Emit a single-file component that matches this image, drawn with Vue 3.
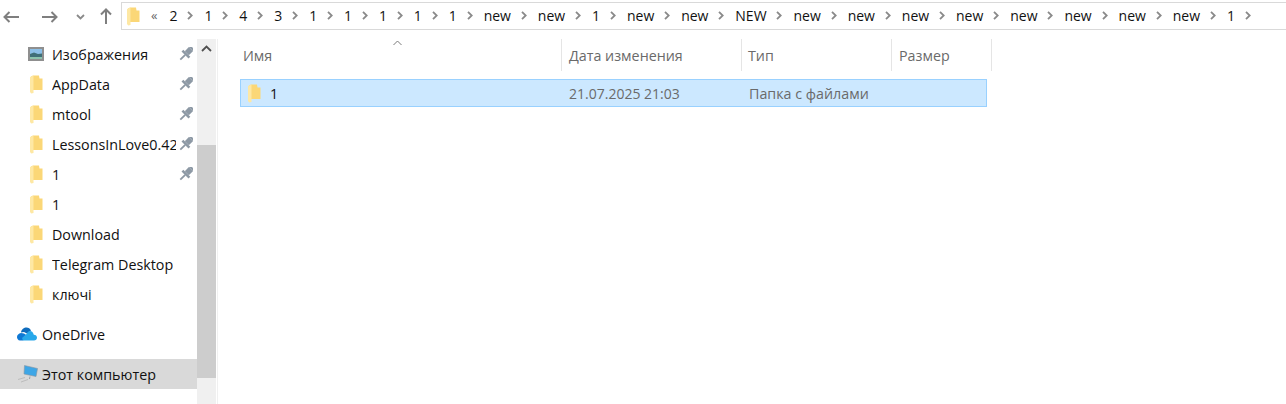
<script setup>
const crumbs = ['2','1','4','3','1','1','1','1','1','new','new','1','new','new','NEW','new','new','new','new','new','new','new','new','1']
const nav = [
  { name: 'Изображения', icon: 'img', pin: true },
  { name: 'AppData', icon: 'folder', pin: true },
  { name: 'mtool', icon: 'folder', pin: true },
  { name: 'LessonsInLove0.42.0', icon: 'folder', pin: true },
  { name: '1', icon: 'folder', pin: true },
  { name: '1', icon: 'folder' },
  { name: 'Download', icon: 'folder' },
  { name: 'Telegram Desktop', icon: 'folder' },
  { name: 'ключі', icon: 'folder' },
]
const folderBack = 'M1 1.500 3 .5H9L9.500 3.500H12.500V15H1z'
const folderFlap = 'M0 2 3.500 .5V4.500 18L1.200 18.500 0 17z'
</script>

<template>
  <div class="win">
    <div class="toolbar">
      <div class="navbtns">
        <svg class="back" width="16" height="12" viewBox="0 0 16 12"><path d="M1.500 6H16M6.500 1 1.500 6l5 5" fill="none" stroke="#7f7f7f" stroke-width="2"/></svg>
        <svg class="fwd" width="16" height="12" viewBox="0 0 16 12"><path d="M0 6H14.500M9.500 1l5 5-5 5" fill="none" stroke="#7f7f7f" stroke-width="2"/></svg>
        <svg class="down" width="9" height="6" viewBox="0 0 9 6"><path d="M1 1l3.500 3.500L8 1" fill="none" stroke="#8a8a8a" stroke-width="1.800"/></svg>
        <svg class="up" width="12" height="16" viewBox="0 0 12 16"><path d="M6 16V1.500M1 6.500l5-5 5 5" fill="none" stroke="#7f7f7f" stroke-width="2"/></svg>
      </div>
      <div class="address">
        <svg class="addr-folder" width="13" height="19" viewBox="0 0 13 19"><path :d="folderBack" fill="#fbd777"/><path :d="folderFlap" fill="#fee8a4"/></svg>
        <span class="more">«</span>
        <div v-for="(c, i) in crumbs" :key="i" class="crumb">
          <span>{{ c }}</span>
          <svg width="6" height="9" viewBox="0 0 6 9"><path d="M1 .8 4.700 4.500 1 8.200" fill="none" stroke="#8a8a8a" stroke-width="1.800"/></svg>
        </div>
      </div>
    </div>
    <div class="body">
      <aside class="side">
        <div class="tree">
          <div v-for="(n, i) in nav" :key="i" class="item">
            <svg v-if="n.icon === 'folder'" class="ficon" width="13" height="19" viewBox="0 0 13 19"><path :d="folderBack" fill="#fbd777"/><path :d="folderFlap" fill="#fee8a4"/></svg>
            <svg v-else class="ficon img" width="16" height="14" viewBox="0 0 16 14"><rect x="1" y="1" width="14" height="12" fill="#fff" stroke="#8f8f8f" stroke-width="2"/><rect x="2" y="2" width="12" height="5" fill="#8cc0e8"/><path d="M2 7l4-1.500 4 1.500 4-.5V12H2z" fill="#3f6f78"/><path d="M2 10h12v2H2z" fill="#8cc4ae"/></svg>
            <span class="lbl">{{ n.name }}</span>
            <svg v-if="n.pin" class="pin" width="14" height="14" viewBox="0 0 14 14"><g transform="rotate(45 7 7) translate(7 7) scale(1.150) translate(-7 -7)" fill="#8d99a5"><rect x="3.700" y="-1" width="6.600" height="2"/><rect x="4.500" y="1" width="5" height="5"/><rect x="2.700" y="6" width="8.600" height="2.200"/><rect x="6.200" y="8" width="1.600" height="6"/></g></svg>
          </div>
          <div class="gap"></div>
          <div class="item top">
            <svg class="cloud" width="20" height="14" viewBox="0 0 20 14"><path d="M4 5.500C4.500 2 7 .5 9.500 .5c2 0 3.700 1 4.500 3l-4 3-3-1.500z" fill="#0f6cbd"/><path d="M6 13.500H3C1 13.500 0 11.500 0 10c0-2 1.700-3.500 4-4l3 .5 3 2z" fill="#0f78d4"/><path d="M6 13.500h11c1.700 0 3-1.200 3-2.800 0-1.700-1.400-3-3.200-3C16 5 14.500 4 13 4c-1.500 0-3 1.500-3.500 3L5 11z" fill="#28a8ea"/></svg>
            <span class="lbl">OneDrive</span>
          </div>
          <div class="gap"></div>
          <div class="item top sel">
            <svg class="pc" width="21" height="18" viewBox="0 0 21 18"><path d="M7.500 .5 20.500 3.500 19 11.500 7 9z" fill="#3ea6e6" stroke="#8a96a0" stroke-width=".6"/><path d="M13 11.500l-.5 2.500" stroke="#9aa0a6"/><path d="M1 14.500 8 12.500M4 17l7-2.500" stroke="#bcbcbc"/></svg>
            <span class="lbl">Этот компьютер</span>
          </div>
        </div>
        <div class="scroll">
          <svg class="sup" width="11" height="7" viewBox="0 0 11 7"><path d="M1 6 5.500 1.500 10 6" fill="none" stroke="#505050" stroke-width="1.800"/></svg>
          <div class="thumb"></div>
        </div>
      </aside>
      <main class="list">
        <div class="head">
          <svg class="sort" width="9" height="6" viewBox="0 0 9 6"><path d="M.5 5 4.500 1 8.500 5" fill="none" stroke="#7a7a7a"/></svg>
          <div class="col c1">Имя</div>
          <div class="col c2">Дата изменения</div>
          <div class="col c3">Тип</div>
          <div class="col c4">Размер</div>
        </div>
        <div class="row">
          <div class="cell n1">
            <svg width="13" height="19" viewBox="0 0 13 19"><path :d="folderBack" fill="#fbd777"/><path :d="folderFlap" fill="#fee8a4"/></svg>
            <span>1</span>
          </div>
          <div class="cell n2">21.07.2025 21:03</div>
          <div class="cell n3">Папка с файлами</div>
        </div>
      </main>
    </div>
  </div>
</template>

<style>
html, body { margin: 0; background: #fff; overflow: hidden; }
</style>

<style scoped>
.win { width: 1286px; height: 404px; display: flex; flex-direction: column; font-family: "Open Sans", "Noto Sans", sans-serif; font-size: 14.3px; color: #111; background: #fff; overflow: hidden; }
.toolbar { height: 39px; display: flex; flex: none; }
.navbtns { width: 121px; display: flex; align-items: center; height: 33px; flex: none; }
.back { margin-left: 3px; }
.fwd { margin-left: 23px; }
.down { margin-left: 18px; }
.up { margin-left: 15px; margin-top: -2px; }
.address { flex: 1; height: 28px; margin-top: 2px; border: 1px solid #d9d9d9; border-right: 0; display: flex; align-items: center; box-sizing: border-box; font-size: 14px; padding-bottom: 2px; }
.addr-folder { margin-left: 5px; margin-top: 2px; }
.more { width: 10px; margin-left: 11px; font-size: 13px; color: #666; line-height: 1; }
.crumb { display: flex; align-items: center; margin-left: 11px; }
.more + .crumb { margin-left: 8.500px; }
.crumb svg { margin-left: 9.900px; margin-top: 1px; }
.body { flex: 1; display: flex; min-height: 0; }
.side { width: 217px; flex: none; display: flex; border-right: 1px solid #f0f0f0; }
.tree { width: 197px; flex: none; }
.item { height: 30px; display: flex; align-items: center; position: relative; }
.ficon { margin-left: 29.500px; flex: none; }
.ficon.img { margin-left: 28px; }
.lbl { position: absolute; left: 52px; max-width: 124px; overflow: hidden; white-space: nowrap; }
.pin { position: absolute; left: 179px; top: 8px; }
.gap { height: 10px; }
.top .lbl { left: 42px; }
.cloud { margin-left: 17px; }
.pc { margin-left: 17px; }
.sel { background: #d9d9d9; }
.scroll { width: 19px; flex: none; background: #f0f0f0; position: relative; margin-right: 1px; }
.sup { position: absolute; left: 4px; top: 6px; }
.thumb { position: absolute; left: 0; right: 0; top: 106px; height: 233px; background: #cdcdcd; }
.list { flex: 1; min-width: 0; }
.head { display: flex; height: 32px; position: relative; }
.sort { position: absolute; left: 175px; top: 1px; }
.col { color: #6a6a6a; border-right: 1px solid #e5e5e5; box-sizing: border-box; padding-left: 6px; line-height: 34px; }
.c1 { width: 325px; margin-left: 19px; }
.c2 { width: 180px; padding-left: 7px; }
.c3 { width: 150px; }
.c4 { width: 100px; padding-left: 7px; }
.row { margin-top: 8px; margin-left: 22px; width: 747px; height: 28px; box-sizing: border-box; background: #cce8ff; border: 1px solid #99d1ff; display: flex; align-items: center; }
.cell { color: #6a6a6a; white-space: nowrap; }
.n1 { width: 328px; display: flex; align-items: center; color: #111; }
.n1 svg { margin-left: 7px; }
.n1 span { margin-left: 9px; }
.n2 { width: 180px; font-size: 14px; }
</style>
